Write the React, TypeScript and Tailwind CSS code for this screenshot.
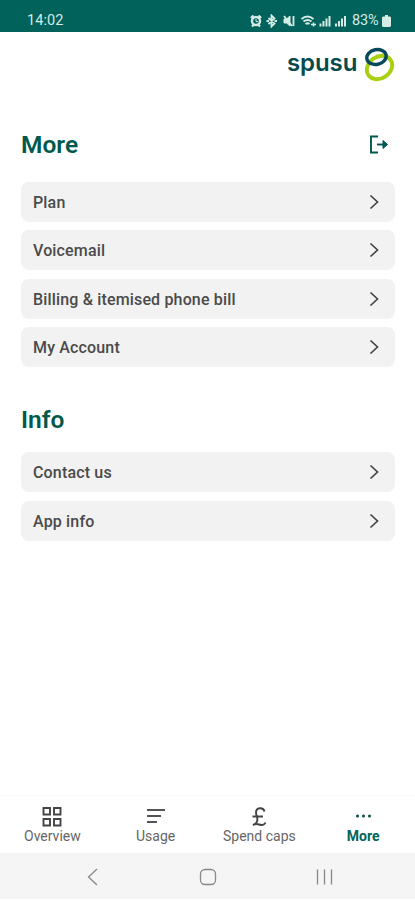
import React from "react";

const planItems = ["Plan", "Voicemail", "Billing & itemised phone bill", "My Account"];
const infoItems = ["Contact us", "App info"];

function StatusBar() {
    return (
        <header className="h-8 bg-[#00625a] text-[#d5ebe6] flex items-center justify-between pl-[27px] pr-6 pt-[9px]">
            <span className="pt-[2px] text-[14.5px] leading-none tracking-[0.1px]">14:02</span>
            <div className="flex items-center">
                <svg width="102" height="14" viewBox="0 0 102 14" fill="none" stroke="currentColor">
                    {/* alarm */}
                    <circle cx="6" cy="7" r="4" strokeWidth="2.400" />
                    <path d="M1 4 3.500 1.500M11 4 8.500 1.500M2 12.500 3.500 11M10 12.500 8.500 11" strokeWidth="2.400" />
                    <path d="M6 5V7.500H8" strokeWidth="1" />
                    {/* bluetooth */}
                    <path d="M18.500 4 24.500 9.500 21.500 12.500V1.500L24.500 4.500 18.500 10M16.500 7H19M24.500 7H27" strokeWidth="1.800" />
                    {/* muted speaker */}
                    <path d="M34 5H36.500L40 2V12L36.500 9H34Z" fill="currentColor" />
                    <path d="M34 2 42 12M43.500 2V12" strokeWidth="1.800" />
                    {/* wifi */}
                    <path d="M51.500 5Q57.500 0 63.500 5M53.500 7.500Q57.500 4.500 61.500 7.500M55.500 10Q57.500 8.500 59.500 10" strokeWidth="1.900" />
                    <path d="M61 10.500H66M63.500 8.500V12.500" strokeWidth="1.500" />
                    {/* signal bars */}
                    <path d="M70.500 12.500V9.500M73.500 12.500V7M76.500 12.500V4.500M79.500 12.500V2" strokeWidth="2" />
                    <path d="M86 12.500V9.500M89 12.500V7M92 12.500V4.500M95 12.500V2" strokeWidth="2" />
                </svg>
                <span className="w-[30px] pt-[2px] text-[14.5px] leading-none tracking-[-0.1px]">83%</span>
                <svg width="9" height="12" viewBox="0 0 9 12" fill="currentColor">
                    <path d="M3 0H6V1.500H8Q9 1.500 9 3V10.500Q9 12 7.500 12H1.500Q0 12 0 10.500V3Q0 1.500 1 1.500H3Z" />
                </svg>
            </div>
        </header>
    );
}

function Logo() {
    return (
        <div className="flex justify-end pr-5 h-[50px] pt-[13px]">
            <span className="w-[76px] font-[Inter,sans-serif] font-semibold text-[24px] leading-9 tracking-[-0.1px] text-[#064a4c]">spusu</span>
            <svg width="32" height="38" viewBox="0 0 32 38" fill="none">
                <ellipse cx="16.500" cy="22.500" rx="13.500" ry="10.800" transform="rotate(-35 16.500 22.500)" stroke="#a8cf12" strokeWidth="3.900" />
                <ellipse cx="13.500" cy="12" rx="9.800" ry="7.400" transform="rotate(-12 13.500 12)" stroke="#07485a" strokeWidth="3.400" />
            </svg>
        </div>
    );
}

function MenuList({ items }: { items: string[] }) {
    return (
        <ul className="flex flex-col gap-[8.5px]">
            {items.map((item) => (
                <li key={item} className="h-10 rounded-lg bg-[#f2f2f2] flex items-center justify-between pl-3 pr-4">
                    <span className="pt-[1.5px] text-base font-medium tracking-[0.16px] text-[#4a4a4a]">{item}</span>
                    <svg width="10" height="16" viewBox="0 0 10 16" fill="none" stroke="#444" strokeWidth="1.700">
                        <path d="M1.500 1.500 8.500 8 1.500 14.500" />
                    </svg>
                </li>
            ))}
        </ul>
    );
}

function TabBar() {
    return (
        <nav className="h-[58px] border-t border-[#fafafa] grid grid-cols-4 text-center text-[14px] leading-4 text-[#666]">
            <div className="flex flex-col items-center pt-[11px] pl-[1px]">
                <svg width="20" height="21" viewBox="0 0 20 21" fill="none" stroke="#444" strokeWidth="1.900">
                    <path d="M1.500 1H8V7.500H1.500ZM12 1H18.500V7.500H12ZM1.500 12H8V18.500H1.500ZM12 12H18.500V18.500H12Z" />
                </svg>
                <span>Overview</span>
            </div>
            <div className="flex flex-col items-center pt-[11px]">
                <svg width="20" height="21" viewBox="0 0 20 21" stroke="#555" strokeWidth="1.900">
                    <path d="M1 3H19M1 9H15M1 15H11" />
                </svg>
                <span>Usage</span>
            </div>
            <div className="flex flex-col items-center pt-[11px]">
                <svg width="20" height="21" viewBox="0 0 20 21" fill="none" stroke="#444" strokeWidth="1.900">
                    <path d="M15.500 4.500C14.500 0 7 0 7 5.500C7 9 10 12 7.500 15.500Q6.500 17 4 18C8 15.500 10 18 12.500 18Q15.500 18 16.500 15.500M3.500 9.500H14" />
                </svg>
                <span>Spend caps</span>
            </div>
            <div className="flex flex-col items-center pt-[11px] text-[#00665a] font-bold">
                <svg width="20" height="21" viewBox="0 0 20 21" fill="#064a45">
                    <circle cx="4.500" cy="9" r="1.500" />
                    <circle cx="10.500" cy="9" r="1.500" />
                    <circle cx="16.500" cy="9" r="1.500" />
                </svg>
                <span>More</span>
            </div>
        </nav>
    );
}

function SystemBar() {
    return (
        <footer className="h-[46px] mb-[1px] bg-[#f5f5f5] flex items-center justify-center gap-[92px] pt-[2px]">
            <svg width="24" height="20" viewBox="0 0 24 20" fill="none" stroke="#888" strokeWidth="1.300">
                <path d="M17 2 8.500 10 17 18" />
            </svg>
            <svg width="24" height="20" viewBox="0 0 24 20" fill="none" stroke="#888" strokeWidth="1.300">
                <rect x="4.500" y="2.500" width="15" height="15" rx="4.500" />
            </svg>
            <svg width="24" height="20" viewBox="0 0 24 20" stroke="#888" strokeWidth="1.300">
                <path d="M5.500 2.500V17.500M12.500 2.500V17.500M19.500 2.500V17.500" />
            </svg>
        </footer>
    );
}

export default function App() {
    return (
        <div className="h-screen bg-white flex flex-col font-[Roboto,sans-serif]">
            <StatusBar />
            <Logo />
            <main className="flex-1 pl-[21px] pr-5">
                <div className="h-[99.75px] pt-[45px] pr-[6px] flex justify-between items-start">
                    <h1 className="text-[24.5px] leading-9 font-semibold text-[#00594c]">More</h1>
                    <svg className="mt-2" width="20" height="20" viewBox="0 0 20 20" fill="none" stroke="#00594c" strokeWidth="1.900">
                        <path d="M9 1.500H2V17.500H9" />
                        <path d="M8 9.500H18" />
                        <path d="M14 5.500 18.500 9.500 14 13.500Z" fill="#00594c" strokeWidth="1" />
                    </svg>
                </div>
                <MenuList items={planItems} />
                <h2 className="h-[85px] pt-[34.25px] text-[24.5px] leading-9 font-semibold text-[#00594c]">Info</h2>
                <MenuList items={infoItems} />
            </main>
            <TabBar />
            <SystemBar />
        </div>
    );
}
